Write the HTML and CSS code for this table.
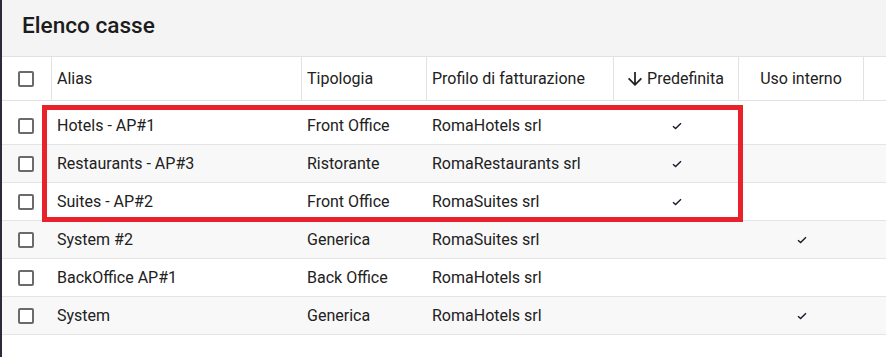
FILE: index.html
```html
<!DOCTYPE html>
<html lang="it">
<head>
<meta charset="utf-8">
<title>Elenco casse</title>
<link rel="stylesheet" href="styles.css">
</head>
<body>
<div class="page">
  <div class="strip"></div>
  <main class="main">
    <header class="titlebar"><h1 class="title">Elenco casse</h1></header>
    <div class="table">
      <div class="row head">
        <div class="cell chk"><span class="box"></span></div>
        <div class="cell">Alias</div>
        <div class="cell">Tipologia</div>
        <div class="cell">Profilo di fatturazione</div>
        <div class="cell center"><svg class="arrow" viewBox="4 4 16 16" width="14" height="14"><path d="M20 12l-1.41-1.41L13 16.17V4h-2v12.17l-5.58-5.59L4 12l8 8 8-8z" fill="#212121"/></svg>Predefinita</div>
        <div class="cell center">Uso interno</div>
        <div class="cell last"></div>
      </div>
      <div class="spacer"></div>
      <div class="body">
        <div class="row">
          <div class="cell chk"><span class="box"></span></div>
          <div class="cell">Hotels - AP#1</div>
          <div class="cell">Front Office</div>
          <div class="cell">RomaHotels srl</div>
          <div class="cell center"><svg class="check" viewBox="0 0 10 8" width="10" height="8"><path d="M1 4.2L3.6 6.6L9 1.2" fill="none" stroke="#1a1a2e" stroke-width="1.4"/></svg></div>
          <div class="cell center"></div>
          <div class="cell"></div>
        </div>
        <div class="row alt">
          <div class="cell chk"><span class="box"></span></div>
          <div class="cell">Restaurants - AP#3</div>
          <div class="cell">Ristorante</div>
          <div class="cell">RomaRestaurants srl</div>
          <div class="cell center"><svg class="check" viewBox="0 0 10 8" width="10" height="8"><path d="M1 4.2L3.6 6.6L9 1.2" fill="none" stroke="#1a1a2e" stroke-width="1.4"/></svg></div>
          <div class="cell center"></div>
          <div class="cell"></div>
        </div>
        <div class="row">
          <div class="cell chk"><span class="box"></span></div>
          <div class="cell">Suites - AP#2</div>
          <div class="cell">Front Office</div>
          <div class="cell">RomaSuites srl</div>
          <div class="cell center"><svg class="check" viewBox="0 0 10 8" width="10" height="8"><path d="M1 4.2L3.6 6.6L9 1.2" fill="none" stroke="#1a1a2e" stroke-width="1.4"/></svg></div>
          <div class="cell center"></div>
          <div class="cell"></div>
        </div>
        <div class="row alt">
          <div class="cell chk"><span class="box"></span></div>
          <div class="cell">System #2</div>
          <div class="cell">Generica</div>
          <div class="cell">RomaSuites srl</div>
          <div class="cell center"></div>
          <div class="cell center"><svg class="check" viewBox="0 0 10 8" width="10" height="8"><path d="M1 4.2L3.6 6.6L9 1.2" fill="none" stroke="#1a1a2e" stroke-width="1.4"/></svg></div>
          <div class="cell"></div>
        </div>
        <div class="row">
          <div class="cell chk"><span class="box"></span></div>
          <div class="cell">BackOffice AP#1</div>
          <div class="cell">Back Office</div>
          <div class="cell">RomaHotels srl</div>
          <div class="cell center"></div>
          <div class="cell center"></div>
          <div class="cell"></div>
        </div>
        <div class="row alt">
          <div class="cell chk"><span class="box"></span></div>
          <div class="cell">System</div>
          <div class="cell">Generica</div>
          <div class="cell">RomaHotels srl</div>
          <div class="cell center"></div>
          <div class="cell center"><svg class="check" viewBox="0 0 10 8" width="10" height="8"><path d="M1 4.2L3.6 6.6L9 1.2" fill="none" stroke="#1a1a2e" stroke-width="1.4"/></svg></div>
          <div class="cell"></div>
        </div>
      </div>
      <div class="highlight"></div>
    </div>
  </main>
</div>
</body>
</html>
```

FILE: styles.css
```css
* { box-sizing: border-box; }
html, body { margin: 0; padding: 0; background: #fff; }
body {
  font-family: Roboto, "Liberation Sans", sans-serif;
  font-size: 16px;
  color: #212121;
}
.page {
  display: flex;
  min-height: 357px;
}
.strip {
  width: 2px;
  flex: 0 0 2px;
  background: #2a2c3c;
}
.main {
  flex: 1;
  min-width: 0;
}
.titlebar {
  height: 57px;
  background: #f4f4f4;
  border-bottom: 1px solid #e2e2e2;
  padding: 13px 0 0 20px;
}
.title {
  margin: 0;
  font-size: 22.6px;
  font-weight: 500;
  line-height: 26px;
  color: #1c1c1c;
}
.table {
  position: relative;
}
.row {
  display: grid;
  grid-template-columns: 50px 250px 125px 187px 125px 125px 1fr;
  height: 38px;
  border-bottom: 1px solid #e4e4e4;
}
.row.alt { background: #f8f8f8; }
.row.head {
  height: 44px;
  border-bottom: 1px solid #e2e2e2;
}
.row.head .cell { border-right: 1px solid #e2e2e2; }
.row.head .cell.last { border-right: none; }
.spacer { height: 6px; }
.cell {
  display: flex;
  align-items: center;
  padding-left: 5px;
  white-space: nowrap;
}
.cell.center {
  justify-content: center;
  padding-left: 0;
}
.cell.chk {
  padding-left: 16px;
}
.box {
  width: 16px;
  height: 16px;
  border: 2px solid #6b6b6b;
  border-radius: 2px;
  background: #fff;
}
.arrow {
  margin-right: 5px;
}
.check { display: block; }
.highlight {
  position: absolute;
  left: 40px;
  top: 48px;
  width: 701px;
  height: 117px;
  border: 5px solid #e8212a;
  pointer-events: none;
}
```
